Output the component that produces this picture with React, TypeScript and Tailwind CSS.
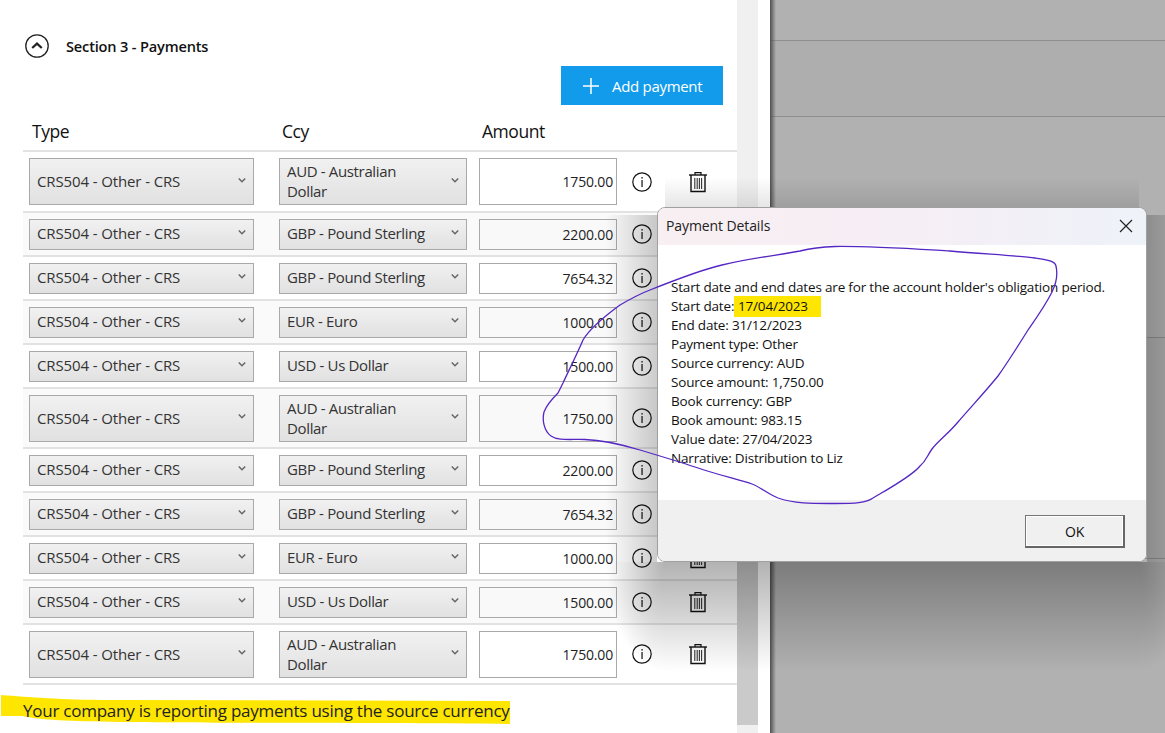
import React from "react";

type Row = { ccy: string; amt: string; tall?: boolean };

const rows: Row[] = [
  { ccy: "AUD - Australian Dollar", amt: "1750.00", tall: true },
  { ccy: "GBP - Pound Sterling", amt: "2200.00" },
  { ccy: "GBP - Pound Sterling", amt: "7654.32" },
  { ccy: "EUR - Euro", amt: "1000.00" },
  { ccy: "USD - Us Dollar", amt: "1500.00" },
  { ccy: "AUD - Australian Dollar", amt: "1750.00", tall: true },
  { ccy: "GBP - Pound Sterling", amt: "2200.00" },
  { ccy: "GBP - Pound Sterling", amt: "7654.32" },
  { ccy: "EUR - Euro", amt: "1000.00" },
  { ccy: "USD - Us Dollar", amt: "1500.00" },
  { ccy: "AUD - Australian Dollar", amt: "1750.00", tall: true },
];

const details = [
  "End date: 31/12/2023",
  "Payment type: Other",
  "Source currency: AUD",
  "Source amount: 1,750.00",
  "Book currency: GBP",
  "Book amount: 983.15",
  "Value date: 27/04/2023",
  "Narrative: Distribution to Liz",
];

function Chevron() {
  return (
    <svg width="10" height="7" viewBox="0 0 10 7" className="shrink-0 -mt-[3px]">
      <path d="M1.8 1.5 L5 4.7 L8.2 1.5" fill="none" stroke="#666" strokeWidth="1.5" />
    </svg>
  );
}

function Info() {
  return (
    <svg width="20" height="20" viewBox="0 0 20 20" className="shrink-0">
      <circle cx="10" cy="10" r="9.2" fill="none" stroke="#111" strokeWidth="1.2" />
      <rect x="9.4" y="5" width="1.3" height="1.6" fill="#222" />
      <rect x="9.4" y="8" width="1.3" height="7" fill="#222" />
    </svg>
  );
}

function Trash() {
  return (
    <svg width="20" height="22" viewBox="0 0 20 22" className="shrink-0">
      <path d="M1 4 H19" stroke="#111" strokeWidth="1.4" />
      <path d="M7 4 V1.6 H13 V4" fill="none" stroke="#111" strokeWidth="1.2" />
      <path d="M3 4 V20.5 H17 V4" fill="none" stroke="#111" strokeWidth="1.4" />
      <path d="M6.8 7 V18 M9.2 7 V18 M11.4 7 V18 M13.6 7 V18" stroke="#333" strokeWidth="1.1" />
    </svg>
  );
}

function Select({ text, tall, width, track }: { text: string; tall?: boolean; width: string; track: string }) {
  return (
    <div
      className={`${width} ${tall ? "h-[47px]" : "h-[31px]"} shrink-0 flex items-center justify-between pr-[6px] pl-[7px] border border-[#a9a9a9] bg-gradient-to-b from-[#f1f1f1] to-[#e1e1e1] text-[#333] text-[15px] ${track}`}
    >
      <span className={`leading-[20px] max-w-[150px] ${tall ? "-mt-[1px]" : "-mt-[2px]"}`}>{text}</span>
      <Chevron />
    </div>
  );
}

export default function App() {
  return (
    <div className="relative w-[1165px] h-[733px] overflow-hidden flex bg-white text-[14px] text-black font-['Open_Sans',sans-serif] tracking-[-0.18px]">
      <div className="w-[737px] shrink-0 flex flex-col">
        <div className="mt-[34px] h-[24px] pl-[25px] flex items-center">
          <svg width="24" height="24" viewBox="0 0 24 24">
            <circle cx="12" cy="12" r="11.2" fill="none" stroke="#222" strokeWidth="1.3" />
            <path d="M7.2 14 L12 9.6 L16.8 14" fill="none" stroke="#222" strokeWidth="2.2" />
          </svg>
          <span className="ml-[17px] mt-[2px] font-semibold text-[14.6px] text-[#111]">Section 3 - Payments</span>
        </div>

        <div className="mt-[8px] flex justify-end pr-[14px]">
          <div className="w-[162px] h-[39px] bg-[#129bea] text-white flex items-center pl-[21px] text-[15px]">
            <svg width="18" height="18" viewBox="0 0 18 18">
              <path d="M9 1 V17 M1 9 H17" stroke="#fff" strokeWidth="1.5" />
            </svg>
            <span className="ml-[12px] mt-[1px] tracking-[-0.3px]">Add payment</span>
          </div>
        </div>

        <div className="ml-[23px] h-[47px] border-b-2 border-[#e2e2e2] flex items-center text-[17.5px] text-[#111] pt-[7px] tracking-[-0.45px]">
          <span className="ml-[9px] w-[250px]">Type</span>
          <span className="w-[200px]">Ccy</span>
          <span>Amount</span>
        </div>

        {rows.map((r, i) => (
          <div
            key={i}
            className={`ml-[23px] ${r.tall ? (i === 0 ? "h-[61px]" : "h-[60px]") : "h-[44px]"} border-b-2 border-[#e2e2e2] flex items-center pl-[6px] ${i % 2 === 1 ? "bg-[#fafafa]" : "bg-white"}`}
          >
            <Select text="CRS504 - Other - CRS" tall={r.tall} width="w-[225px]" track="tracking-[-0.12px]" />
            <div className="ml-[25px]">
              <Select text={r.ccy} tall={r.tall} width="w-[188px]" track="tracking-[-0.35px]" />
            </div>
            <div
              className={`ml-[12px] w-[138px] ${r.tall ? "h-[47px]" : "h-[31px]"} border border-[#a9a9a9] flex items-center justify-end pr-[3px] text-[#222] ${i % 2 === 1 ? "bg-[#f9f9f9]" : "bg-white"}`}
            >
              {r.amt}
            </div>
            <div className="ml-[15px]">
              <Info />
            </div>
            <div className="ml-[36px]">
              <Trash />
            </div>
          </div>
        ))}

        <div className="relative z-10 ml-[23px] mt-[15px] text-[17px] leading-[22px] text-[#222] tracking-[-0.24px]">
          Your company is reporting payments using the source currency
        </div>
      </div>

      <div className="w-[21px] shrink-0 bg-[#f0f0f0]">
        <div className="mt-[300px] h-[425px] bg-[#cacaca]" />
      </div>
      <div className="w-[12px] shrink-0 bg-white" />

      <div className="relative flex-1 flex flex-col bg-[#b1b1b1]">
        <div className="h-[41px] shrink-0 border-b border-[#8e8e8e]" />
        <div className="h-[76px] shrink-0 border-b border-[#8e8e8e] bg-[#aeaeae]" />
        <div className="h-[221px] shrink-0 border-b border-[#8e8e8e]" />
        <div className="h-[221px] shrink-0 border-b border-[#8e8e8e] bg-[#aeaeae]" />
        <div className="absolute left-0 top-0 bottom-0 w-[6px] bg-gradient-to-r from-[#4f4f4f] to-transparent" />
      </div>

      {/* yellow highlighter stroke */}
      <svg className="absolute left-0 top-0 pointer-events-none" width="1165" height="733" viewBox="0 0 1165 733">
        <path
          d="M1 695 C30 697 60 700 110 700 L510 701 L510 724 C400 723 200 723 120 722 C70 721 40 720 22 716 L1 716 Z"
          fill="#ffe600"
        />
      </svg>

      {/* soft shadow cast by the dialog, built from gradients */}
      <div className="absolute left-[665px] top-[562px] w-[474px] h-[110px] bg-gradient-to-b from-black/30 to-transparent" />
      <div className="absolute left-[605px] top-[562px] w-[60px] h-[110px] bg-[radial-gradient(ellipse_at_top_right,rgba(0,0,0,0.3),transparent_70%)]" />
      <div className="absolute left-[1139px] top-[562px] w-[60px] h-[110px] bg-[radial-gradient(ellipse_at_top_left,rgba(0,0,0,0.3),transparent_70%)]" />
      <div className="absolute left-[605px] top-[215px] w-[52px] h-[347px] bg-gradient-to-l from-black/20 to-transparent" />
      <div className="absolute left-[1147px] top-[215px] w-[52px] h-[347px] bg-gradient-to-r from-black/20 to-transparent" />
      <div className="absolute left-[665px] top-[177px] w-[474px] h-[30px] bg-gradient-to-t from-black/10 to-transparent" />

      {/* dialog */}
      <div className="absolute left-[657px] top-[207px] w-[490px] h-[355px] rounded-[8px] border border-[#a0a0a0] bg-white flex flex-col overflow-hidden">
        <div className="h-[37px] shrink-0 flex items-center justify-between pl-[8px] pr-[13px] pb-[2px] bg-gradient-to-r from-[#f7eff1] via-[#f6eef5] to-[#eef2f9] text-[#222] tracking-[-0.1px]">
          <span>Payment Details</span>
          <svg width="14" height="14" viewBox="0 0 14 14">
            <path d="M1 1 L13 13 M13 1 L1 13" stroke="#222" strokeWidth="1.2" />
          </svg>
        </div>
        <div className="flex-1 pl-[13px] pt-[33px] leading-[19px] text-[#111] text-[13.5px]">
          <div>Start date and end dates are for the account holder's obligation period.</div>
          <div className="flex">
            <span className="w-[63px] shrink-0 whitespace-nowrap">Start date:</span>
            <span className="-my-[1px] w-[87px] h-[21px] bg-[#ffe600] pl-[4px] leading-[21px]">17/04/2023</span>
          </div>
          {details.map((d) => (
            <div key={d}>{d}</div>
          ))}
        </div>
        <div className="h-[61px] shrink-0 bg-[#f0f0f0] flex justify-end pt-[15px] pr-[21px]">
          <div className="w-[100px] h-[33px] border-t border-l border-[#777] border-r-2 border-b-2 border-r-[#666] border-b-[#666]">
            <div className="h-full border border-white flex items-center justify-center text-[#111]">OK</div>
          </div>
        </div>
      </div>

      {/* hand-drawn pen annotation */}
      <svg className="absolute left-0 top-0 pointer-events-none z-20" width="1165" height="733" viewBox="0 0 1165 733">
        <path
          d="M558 393 L563 383 C568 372 578 352 583 340 C590 328 605 316 620 305 C632 298 642 293 650 290 C675 280 700 270 722 265 C750 258 780 255 800 251 C812 248 820 247 835 246.5 C870 246 915 249 950 251 C985 254 1020 256 1035 258 C1048 260 1055 261 1056 266 C1058 275 1056 284 1052 292 C1045 306 1035 320 1028 330 C1018 346 1008 362 998 376 C985 392 970 408 958 422 C948 434 938 441 932 449 C927 456 926 461 920 466 C912 476 890 488 873 498 C866 503 855 503.5 835 503.5 C815 503.5 795 504 778 498 C768 494 762 488 752 484 C740 480 715 474 695 467 C680 462 660 456 640 450 C620 444 600 440 585 439.5 C570 439 558 441 551 436 C544 431 542 420 544 412 C547 404 553 398 558 393"
          fill="none"
          stroke="#5526c4"
          strokeWidth="1.3"
        />
      </svg>
    </div>
  );
}
